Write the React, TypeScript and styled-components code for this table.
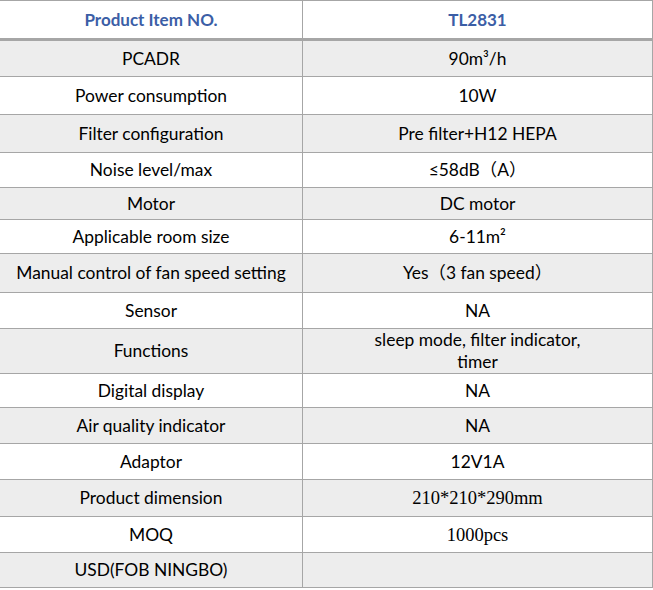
import styled, { createGlobalStyle } from "styled-components";

const GlobalStyle = createGlobalStyle`
  html, body {
    margin: 0;
    padding: 0;
    background: #ffffff;
  }
`;

const SpecTable = styled.div`
  width: 653px;
  border-top: 1px solid #a6a6a6;
  font-family: Lato, "Noto Sans CJK SC", sans-serif;
  font-size: 17.4px;
  color: #000000;
`;

const Row = styled.div<{ h: number; shade?: boolean; head?: boolean }>`
  display: grid;
  grid-template-columns: 303px 350px;
  box-sizing: border-box;
  height: ${({ h }) => h}px;
  background: ${({ shade }) => (shade ? "#ededed" : "#ffffff")};
  border-bottom: ${({ head }) => (head ? "3px" : "1px")} solid #a6a6a6;
`;

const Cell = styled.div<{ head?: boolean; serif?: boolean }>`
  display: flex;
  align-items: center;
  justify-content: center;
  text-align: center;
  line-height: 22px;
  box-sizing: border-box;
  border-right: 1px solid #a6a6a6;
  font-weight: ${({ head }) => (head ? 700 : 400)};
  font-size: ${({ head }) => (head ? "17px" : "inherit")};
  color: ${({ head }) => (head ? "#3b5ea6" : "#000000")};
  ${({ serif }) =>
    serif ? 'font-family: "Liberation Serif", serif; font-size: 18.5px;' : ""}
`;

const Value = styled.span`
  white-space: pre-line;
`;

type Spec = { label: string; value: string; h: number; serif?: boolean };

const specs: Spec[] = [
  { label: "PCADR", value: "90m³/h", h: 36 },
  { label: "Power consumption", value: "10W", h: 38 },
  { label: "Filter configuration", value: "Pre filter+H12 HEPA", h: 38 },
  { label: "Noise level/max", value: "≤58dB（A）", h: 35 },
  { label: "Motor", value: "DC motor", h: 32 },
  { label: "Applicable room size", value: "6-11m²", h: 34 },
  { label: "Manual control of fan speed setting", value: "Yes（3 fan speed）", h: 39 },
  { label: "Sensor", value: "NA", h: 36 },
  { label: "Functions", value: "sleep mode, filter indicator,\ntimer", h: 45 },
  { label: "Digital display", value: "NA", h: 34 },
  { label: "Air quality indicator", value: "NA", h: 36 },
  { label: "Adaptor", value: "12V1A", h: 36 },
  { label: "Product dimension", value: "210*210*290mm", h: 37, serif: true },
  { label: "MOQ", value: "1000pcs", h: 36, serif: true },
  { label: "USD(FOB NINGBO)", value: "", h: 35 },
];

export default function App() {
  return (
    <>
      <GlobalStyle />
      <SpecTable>
        <Row h={40} head>
          <Cell head>Product Item NO.</Cell>
          <Cell head>TL2831</Cell>
        </Row>
        {specs.map((s, i) => (
          <Row key={s.label} h={s.h} shade={i % 2 === 0}>
            <Cell>{s.label}</Cell>
            <Cell serif={s.serif}>
              <Value>{s.value}</Value>
            </Cell>
          </Row>
        ))}
      </SpecTable>
    </>
  );
}
